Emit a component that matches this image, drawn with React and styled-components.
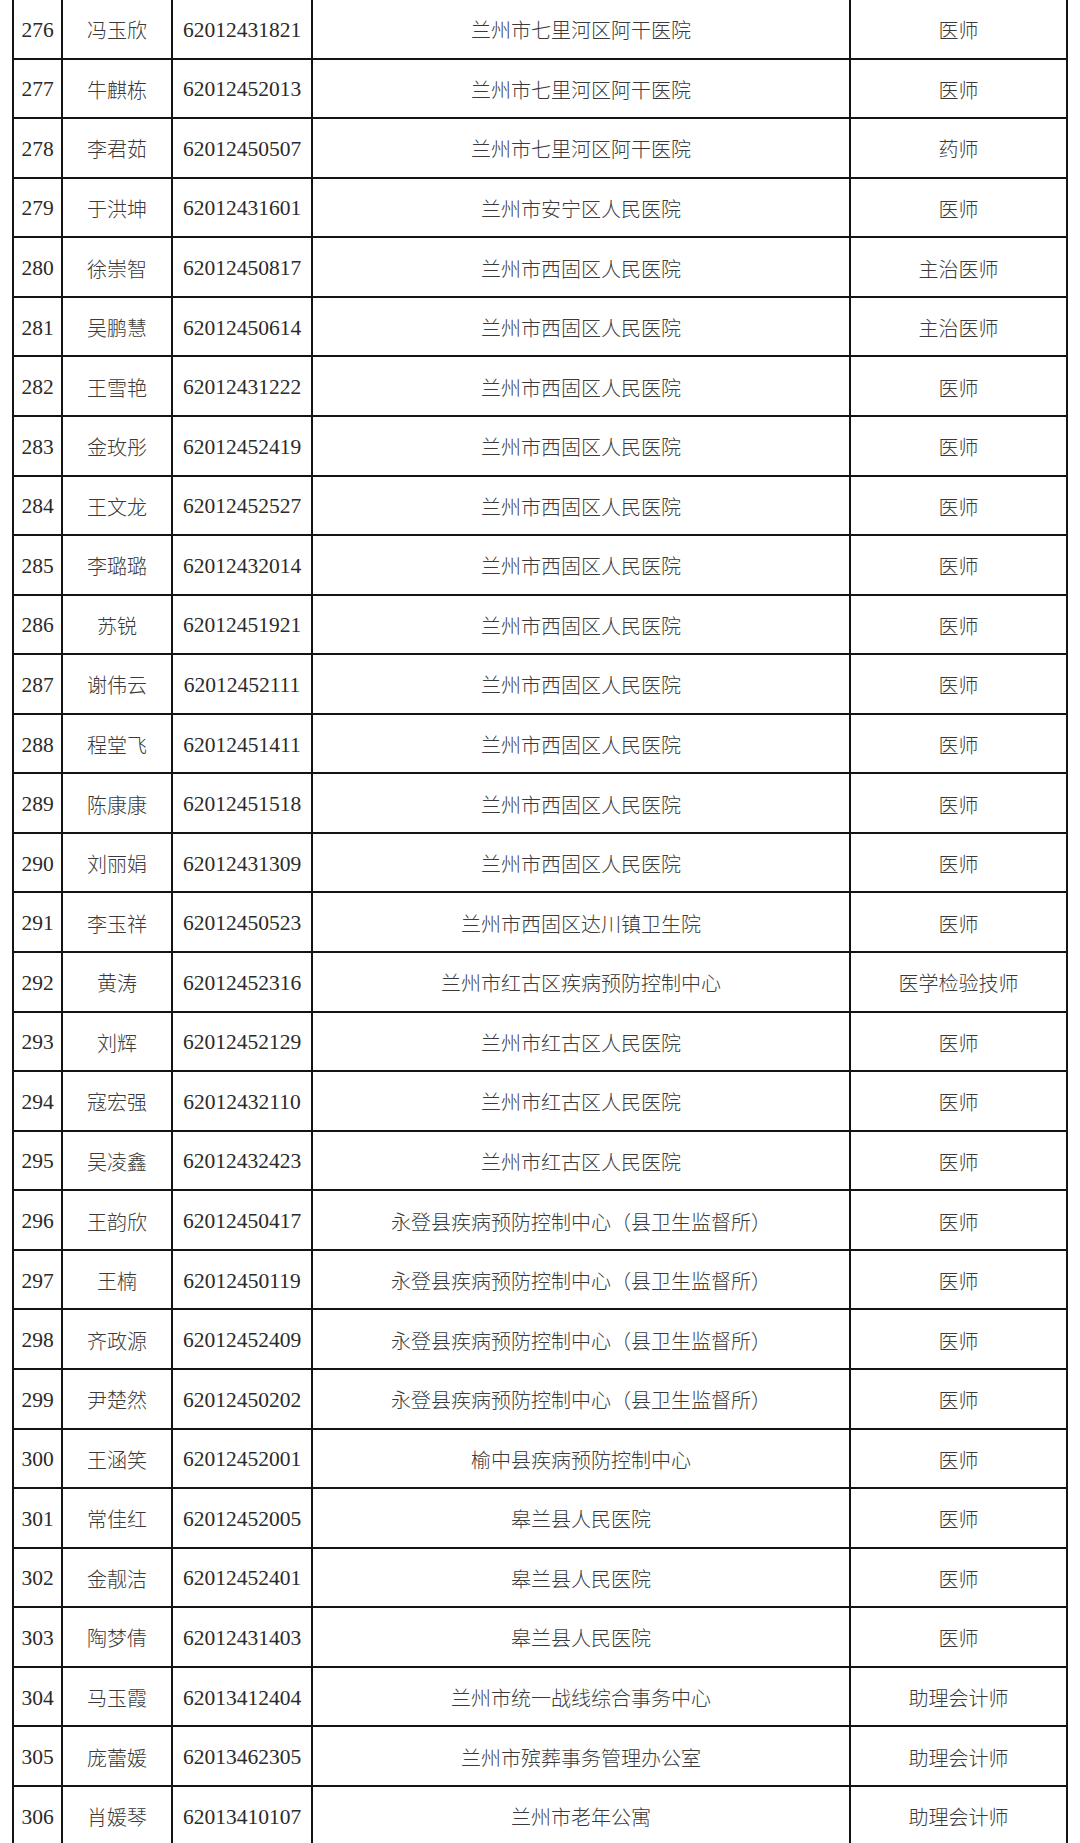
import styled, { createGlobalStyle } from 'styled-components';

const GlobalStyle = createGlobalStyle`
  html, body {
    margin: 0;
    padding: 0;
    background: #ffffff;
  }
  body {
    overflow: hidden;
  }
`;

const Page = styled.div`
  width: 1080px;
  height: 1843px;
  overflow: hidden;
  background: #ffffff;
`;

const Table = styled.div`
  display: grid;
  grid-template-columns: 49px 110px 140px 538px 217px;
  grid-auto-rows: 59.57px;
  width: 1056px;
  box-sizing: border-box;
  margin: -2px 0 0 12px;
  border-left: 2px solid #141414;
  border-top: 2px solid #141414;
`;

const Cell = styled.div`
  box-sizing: border-box;
  display: flex;
  align-items: center;
  justify-content: center;
  border-right: 2px solid #141414;
  border-bottom: 2px solid #141414;
  padding-top: ${(p) => (p.$num ? '3px' : '2px')};
  color: ${(p) => (p.$num ? '#2a2a2a' : '#3a3a3a')};
  white-space: nowrap;
  font-family: ${(p) =>
    p.$num
      ? '"Liberation Serif", "Noto Sans CJK SC", serif'
      : '"Noto Sans CJK SC", "Liberation Serif", sans-serif'};
  font-size: ${(p) => (p.$num ? '21.5px' : '20px')};
  font-weight: ${(p) => (p.$num ? 400 : 300)};
`;

const ROWS = [
  ['276', '冯玉欣', '62012431821', '兰州市七里河区阿干医院', '医师'],
  ['277', '牛麒栋', '62012452013', '兰州市七里河区阿干医院', '医师'],
  ['278', '李君茹', '62012450507', '兰州市七里河区阿干医院', '药师'],
  ['279', '于洪坤', '62012431601', '兰州市安宁区人民医院', '医师'],
  ['280', '徐崇智', '62012450817', '兰州市西固区人民医院', '主治医师'],
  ['281', '吴鹏慧', '62012450614', '兰州市西固区人民医院', '主治医师'],
  ['282', '王雪艳', '62012431222', '兰州市西固区人民医院', '医师'],
  ['283', '金玫彤', '62012452419', '兰州市西固区人民医院', '医师'],
  ['284', '王文龙', '62012452527', '兰州市西固区人民医院', '医师'],
  ['285', '李璐璐', '62012432014', '兰州市西固区人民医院', '医师'],
  ['286', '苏锐', '62012451921', '兰州市西固区人民医院', '医师'],
  ['287', '谢伟云', '62012452111', '兰州市西固区人民医院', '医师'],
  ['288', '程堂飞', '62012451411', '兰州市西固区人民医院', '医师'],
  ['289', '陈康康', '62012451518', '兰州市西固区人民医院', '医师'],
  ['290', '刘丽娟', '62012431309', '兰州市西固区人民医院', '医师'],
  ['291', '李玉祥', '62012450523', '兰州市西固区达川镇卫生院', '医师'],
  ['292', '黄涛', '62012452316', '兰州市红古区疾病预防控制中心', '医学检验技师'],
  ['293', '刘辉', '62012452129', '兰州市红古区人民医院', '医师'],
  ['294', '寇宏强', '62012432110', '兰州市红古区人民医院', '医师'],
  ['295', '吴凌鑫', '62012432423', '兰州市红古区人民医院', '医师'],
  ['296', '王韵欣', '62012450417', '永登县疾病预防控制中心（县卫生监督所）', '医师'],
  ['297', '王楠', '62012450119', '永登县疾病预防控制中心（县卫生监督所）', '医师'],
  ['298', '齐政源', '62012452409', '永登县疾病预防控制中心（县卫生监督所）', '医师'],
  ['299', '尹楚然', '62012450202', '永登县疾病预防控制中心（县卫生监督所）', '医师'],
  ['300', '王涵笑', '62012452001', '榆中县疾病预防控制中心', '医师'],
  ['301', '常佳红', '62012452005', '皋兰县人民医院', '医师'],
  ['302', '金靓洁', '62012452401', '皋兰县人民医院', '医师'],
  ['303', '陶梦倩', '62012431403', '皋兰县人民医院', '医师'],
  ['304', '马玉霞', '62013412404', '兰州市统一战线综合事务中心', '助理会计师'],
  ['305', '庞蕾媛', '62013462305', '兰州市殡葬事务管理办公室', '助理会计师'],
  ['306', '肖媛琴', '62013410107', '兰州市老年公寓', '助理会计师'],
];

const App = () => (
  <Page>
    <GlobalStyle />
    <Table>
      {ROWS.map(([no, name, id, unit, title]) => [
        <Cell key={`${no}-no`} $num>{no}</Cell>,
        <Cell key={`${no}-name`}>{name}</Cell>,
        <Cell key={`${no}-id`} $num>{id}</Cell>,
        <Cell key={`${no}-unit`}>{unit}</Cell>,
        <Cell key={`${no}-title`}>{title}</Cell>,
      ])}
    </Table>
  </Page>
);

export default App;
